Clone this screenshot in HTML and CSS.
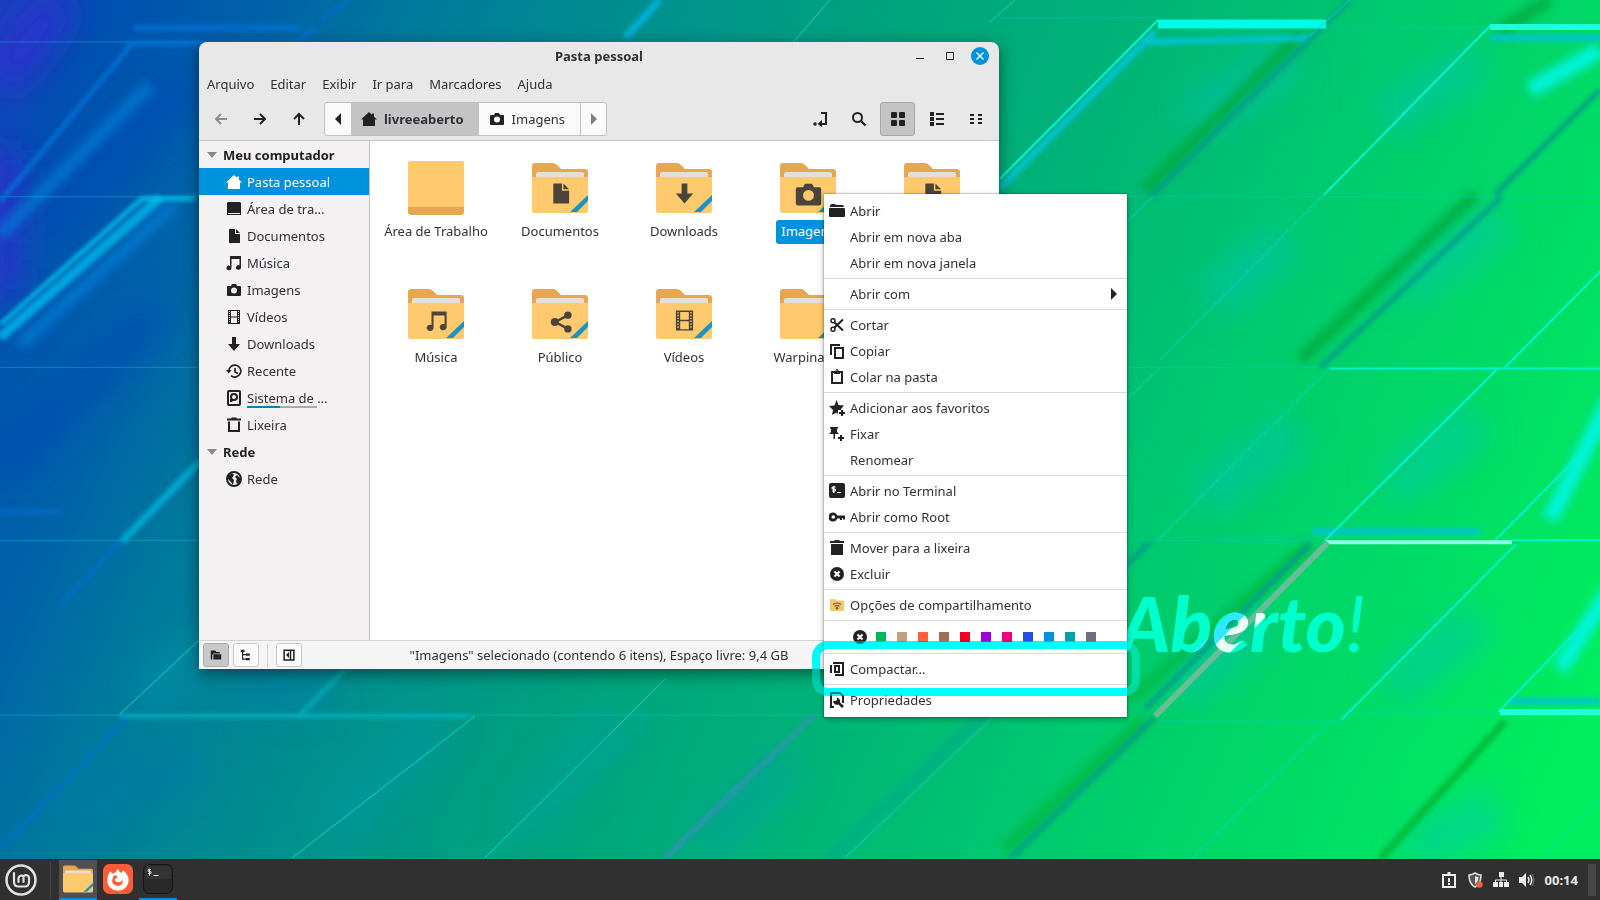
FILE: index.html
```html
<!DOCTYPE html>
<html lang="pt-BR">
<head>
<meta charset="utf-8">
<title>Pasta pessoal</title>
<link rel="stylesheet" href="styles.css">
</head>
<body>
<svg class="defs" aria-hidden="true">
  <defs>
    <symbol id="i-home" viewBox="0 0 16 16"><path d="M8 1 0 8.500h2V15h12V8.500h2L13 5.700V2.500h-2v1.300z"/></symbol>
    <symbol id="i-desktop" viewBox="0 0 16 16"><path d="M2 1h12l1 1v12H1V2z"/><path d="M2 12.500h12" stroke="#eee" stroke-width="1"/></symbol>
    <symbol id="i-doc" viewBox="0 0 16 16"><path d="M3 1h6v5h5v9H3zM10 1l4 4h-4z"/></symbol>
    <symbol id="i-music" viewBox="0 0 16 16"><path d="M4 1h11v11.500a2.500 2.300 0 1 1-1.500-2.100V4h-8v9a2.500 2.300 0 1 1-1.500-2.100z"/></symbol>
    <symbol id="i-camera" viewBox="0 0 16 16"><path fill-rule="evenodd" d="M6 2h4l1 2h3q1 0 1 1v8q0 1-1 1H2q-1 0-1-1V5q0-1 1-1h3zM8 5.500a3 3 0 1 0 0 6 3 3 0 0 0 0-6z"/></symbol>
    <symbol id="i-video" viewBox="0 0 16 16"><path fill-rule="evenodd" d="M2 1h12v14H2zm3 1v5.500h6V2zm0 6.500V14h6V8.500zM3 2v1h1V2zm0 2v1h1V4zm0 2v1h1V6zm0 2v1h1V8zm0 2v1h1v-1zm0 2v1h1v-1zm9-10v1h1V2zm0 2v1h1V4zm0 2v1h1V6zm0 2v1h1V8zm0 2v1h1v-1zm0 2v1h1v-1z"/></symbol>
    <symbol id="i-down" viewBox="0 0 16 16"><path d="M6 1h4v7h4l-6 7-6-7h4z"/></symbol>
    <symbol id="i-recent" viewBox="0 0 16 16"><path d="M2.800 8A6 6 0 1 1 5 12.700M9 5v4l3 1.500" fill="none" stroke="currentColor" stroke-width="1.700"/><path d="M0 7h5.500L2.800 10.500z"/></symbol>
    <symbol id="i-disk" viewBox="0 0 16 16"><rect x="2" y="1" width="12" height="14" rx="1" fill="none" stroke="currentColor" stroke-width="2"/><circle cx="8" cy="7" r="3" fill="none" stroke="currentColor" stroke-width="2"/><path d="M4 9h4l-2 3H4z"/></symbol>
    <symbol id="i-trash" viewBox="0 0 16 16"><path fill-rule="evenodd" d="M1 1.500h4l1-1h4l1 1h4v2H1zM2 4.500h12V15H2zm2 0V13h8V4.500z"/></symbol>
    <symbol id="i-trashfull" viewBox="0 0 16 16"><path d="M1 1h4l1-1h4l1 1h4v2H1zM2 4h12v11H2z"/></symbol>
    <symbol id="i-globe" viewBox="0 0 16 16"><circle cx="8" cy="8" r="7" fill="none" stroke="currentColor" stroke-width="2"/><path d="M2 5l4-3 2 2-2 3 2 2-1 5-2-3-3-3zM11 4l3 3v4l-3 2-1-3 1-2-2-2z"/></symbol>
    <symbol id="i-share" viewBox="0 0 16 16"><path d="M13 3 4 8l9 5" fill="none" stroke="currentColor" stroke-width="1.800"/><circle cx="13" cy="3" r="2.700"/><circle cx="3.500" cy="8" r="2.900"/><circle cx="13" cy="13" r="2.700"/></symbol>
    <symbol id="i-left" viewBox="0 0 16 16"><path d="M14 8H3M8 3 3 8l5 5" fill="none" stroke="currentColor" stroke-width="2"/></symbol>
    <symbol id="i-right" viewBox="0 0 16 16"><path d="M2 8h11M8 3l5 5-5 5" fill="none" stroke="currentColor" stroke-width="2"/></symbol>
    <symbol id="i-up" viewBox="0 0 16 16"><path d="M8 14V3M3 8l5-5 5 5" fill="none" stroke="currentColor" stroke-width="2"/></symbol>
    <symbol id="i-tril" viewBox="0 0 16 16"><path d="M11 2v12L5 8z"/></symbol>
    <symbol id="i-trir" viewBox="0 0 16 16"><path d="M5 2v12l6-6z"/></symbol>
    <symbol id="i-trid" viewBox="0 0 16 16"><path d="M3 5h10l-5 6z"/></symbol>
    <symbol id="i-path" viewBox="0 0 16 16"><path d="M9 2h5v11H8" fill="none" stroke="currentColor" stroke-width="2"/><path d="M10 9v7l-4.500-3z"/><circle cx="3" cy="13" r="1.800"/></symbol>
    <symbol id="i-search" viewBox="0 0 16 16"><circle cx="6.500" cy="6.500" r="4.500" fill="none" stroke="currentColor" stroke-width="2"/><path d="m9.500 9.500 5 5" stroke="currentColor" stroke-width="2.400"/></symbol>
    <symbol id="i-grid" viewBox="0 0 16 16"><rect x="1" y="1" width="6" height="6" rx="1"/><rect x="9" y="1" width="6" height="6" rx="1"/><rect x="1" y="9" width="6" height="6" rx="1"/><rect x="9" y="9" width="6" height="6" rx="1"/></symbol>
    <symbol id="i-list" viewBox="0 0 16 16"><path d="M1 1h4v4H1zM1 6h4v4H1zM1 11h4v4H1zM7 2h8v2H7zM7 7h8v2H7zM7 12h8v2H7z"/></symbol>
    <symbol id="i-compact" viewBox="0 0 16 16"><path d="M2 3h4v2H2zM2 7h4v2H2zM2 11h4v2H2zM10 3h4v2h-4zM10 7h4v2h-4zM10 11h4v2h-4z"/></symbol>
    <symbol id="i-folder" viewBox="0 0 16 16"><path d="M1 3q0-2 2-2h3l1 1h6q2 0 2 2H1zM0 6q0-1 1-1h14q1 0 1 1v7q0 1-1 1H1q-1 0-1-1z"/></symbol>
    <symbol id="i-minifolder" viewBox="0 0 16 16"><path d="M1 2h6l1.500 2H13v2H5L3 8v6H1zM4.500 7H15v7H4.500z"/></symbol>
    <symbol id="i-cut" viewBox="0 0 16 16"><path d="M14 2.500 5 11M14 13.500 5 5" fill="none" stroke="currentColor" stroke-width="2"/><circle cx="4" cy="3.800" r="2" fill="none" stroke="currentColor" stroke-width="1.500"/><circle cx="4" cy="12.200" r="2" fill="none" stroke="currentColor" stroke-width="1.500"/></symbol>
    <symbol id="i-copy" viewBox="0 0 16 16"><path d="M2 12V2h9" fill="none" stroke="currentColor" stroke-width="2"/><path d="M6 5h8v10H6z" fill="none" stroke="currentColor" stroke-width="2"/></symbol>
    <symbol id="i-paste" viewBox="0 0 16 16"><path d="M3 3h10v11H3z" fill="none" stroke="currentColor" stroke-width="2"/><path fill-rule="evenodd" d="M5 2h1.500a1.500 2 0 0 1 3 0H11v3H5zM7.500 1.500v1h1v-1z"/></symbol>
    <symbol id="i-star" viewBox="0 0 16 16"><path d="m7.500 0 2 5 5.500.500-3 3.500v1H9v4l-1.500-1.500L3 15l1-5L0 6l5.500-.500zM12 10h2v2h2v2h-2v2h-2v-2h-2v-2h2z"/></symbol>
    <symbol id="i-pin" viewBox="0 0 16 16"><path d="M1 1h8v1.500H8V6l2 2H6v5H4.500V8H0l2-2V2.500H1zM11 9h2v2h2v2h-2v2h-2v-2H9v-2h2z"/></symbol>
    <symbol id="i-term" viewBox="0 0 16 16"><rect width="16" height="15" rx="2"/><path d="M6.500 4H4q-1 0-1 1t1 1h1.500q1 0 1 1t-1 1H3M4.800 3v7M8 9.500h4" fill="none" stroke="#fff" stroke-width="1.200"/></symbol>
    <symbol id="i-key" viewBox="0 0 16 16"><path fill-rule="evenodd" d="M4 3.500A4.500 4.500 0 0 1 8.200 6.500H16v4h-2v-1.500h-1V11h-2V9.500H8.200A4.500 4.500 0 1 1 4 3.500zM4.300 6.200a1.800 1.800 0 1 0 0 3.600 1.800 1.800 0 0 0 0-3.600z"/></symbol>
    <symbol id="i-x" viewBox="0 0 16 16"><circle cx="8" cy="8" r="7"/><path d="m5.500 5.500 5 5m0-5-5 5" stroke="#fff" stroke-width="2"/></symbol>
    <symbol id="i-sharef" viewBox="0 0 16 16"><path d="M1 3q0-1 1-1h4l1.500 1.500H14q1 0 1 1V13q0 1-1 1H2q-1 0-1-1z" fill="#f5c56f"/><path d="M4 7.500q4-3 8 0M5.500 9.500q2.500-2 5 0" fill="none" stroke="#6b5430" stroke-width="1.200"/><circle cx="8" cy="11.300" r="1.200" fill="#6b5430"/></symbol>
    <symbol id="i-zip" viewBox="0 0 16 16"><path d="M4 2h10v12H6M2 4v8" fill="none" stroke="currentColor" stroke-width="2"/><path d="M6 5h4v6H6z" fill="none" stroke="currentColor" stroke-width="2"/></symbol>
    <symbol id="i-props" viewBox="0 0 16 16"><path d="M5 15H2V1h9l3 3v7" fill="none" stroke="currentColor" stroke-width="2"/><path d="M4 9h2.500l1.500-1V5.500a4 4 0 0 1 3 5L15 14l-2 2-3.500-3.500A4 4 0 0 1 4 9z"/></symbol>
    <symbol id="i-tree" viewBox="0 0 16 16"><path d="M3.500 2v11.500H8M3.500 7.500H8M5 3.500H3" fill="none" stroke="currentColor" stroke-width="1.500"/><path d="M1 1h5v3H1zM8 6h5v3H8zM8 12h5v3H8z"/></symbol>
    <symbol id="i-panel" viewBox="0 0 16 16"><path d="M1.500 1.500h13v13h-13zM10 2v12" fill="none" stroke="currentColor" stroke-width="2"/><path d="M8 4v8L4 8z"/></symbol>
    <symbol id="folder" viewBox="0 0 56 56"><path d="M0 6q0-3 3-3h18q2 0 4 2l4 4h24q3 0 3 3v12H0z" fill="#e6a750"/><path d="M4 20v-6q0-2 2-2h44q2 0 2 2v6z" fill="#e4e0d8"/><path d="M0 17h56v33q0 3-3 3H3q-3 0-3-3z" fill="#ffca6d"/><path d="M0 50q0 3 3 3h50q3 0 3-3v1q0 2-3 2H3q-3 0-3-2z" fill="#d5b374"/><path d="M56 35v6L45 52h-7z" fill="#1a94c4"/></symbol>
  </defs>
</svg>

<main class="desktop">
  <svg class="wallpaper" viewBox="0 0 1600 860" preserveAspectRatio="none" aria-hidden="true">
    <defs>
      <linearGradient id="base" x1="0" y1="0" x2="1600" y2="700" gradientUnits="userSpaceOnUse">
        <stop offset="0" stop-color="#1a40c0"/><stop offset=".06" stop-color="#0050b0"/><stop offset=".15" stop-color="#0064a8"/><stop offset=".22" stop-color="#007a9c"/><stop offset=".34" stop-color="#00908e"/><stop offset=".48" stop-color="#00a47c"/><stop offset=".6" stop-color="#00b478"/><stop offset=".77" stop-color="#00cf6c"/><stop offset="1" stop-color="#00ee5e"/>
      </linearGradient>
      <filter id="soft" x="-30%" y="-30%" width="160%" height="160%"><feGaussianBlur stdDeviation="16"/></filter>
      <filter id="fine" x="-30%" y="-30%" width="160%" height="160%"><feGaussianBlur stdDeviation="2"/></filter>
      <filter id="edge" x="-30%" y="-30%" width="160%" height="160%"><feGaussianBlur stdDeviation="5"/></filter>
      <clipPath id="word"><text class="brand" x="1120" y="653">Aberto<tspan class="bang">!</tspan></text></clipPath>
    </defs>
    <rect width="1600" height="860" fill="url(#base)"/>
    <g filter="url(#soft)" fill="none" stroke-width="44">
      <path d="M0 80 60 0M0 150V300" stroke="#3a28d8" opacity=".6"/>
      <path d="M40 240 190 80M0 470 160 310" stroke="#0048b8" opacity=".5"/>
      <path d="M1190 120 1290 60M1380 120 1480 60M1210 300 1290 240M1400 290 1500 220M1200 500 1300 430M1390 490 1480 420M1180 690 1260 620M1390 690 1480 620M1410 850 1500 810" stroke="#00c0c0" opacity=".45"/>
      <path d="M140 700 260 600M330 830 440 720M520 830 620 720M700 850 790 760" stroke="#0098b0" opacity=".4"/>
      <path d="M60 820 200 760M240 690 330 690" stroke="#0078b0" opacity=".4"/>
    </g>
    <g filter="url(#edge)" fill="none" stroke-width="12">
      <path d="M1145 190 1300 35M1300 360 1475 195M1500 30 1550 0" stroke="#00a838" opacity=".8"/>
      <path d="M1130 700 1310 545M1005 850 1145 720" stroke="#00b840" opacity=".8"/>
      <path d="M1610 400 1550 520M1610 590 1560 670M1530 90 1600 50" stroke="#00f4dc" stroke-width="16"/>
      <path d="M20 345 175 205M0 235 150 85" stroke="#0080d8" opacity=".7"/>
      <path d="M830 860 990 710M490 860 650 712" stroke="#00a890" opacity=".6"/>
    </g>
    <g fill="none" stroke="#00d0e0" stroke-width="1" opacity=".4">
      <path d="M0 42H1000M0 197H200M1000 18H1158M1328 27H1490M1127 197H1600M0 368H200M1127 368H1330M0 541H200M1127 541H1325M1160 722H1340L1352 714H1500M0 716H830"/>
    </g>
    <g filter="url(#fine)" fill="none">
      <path d="M0 338 160 198" stroke="#00a4e0" stroke-width="10"/>
      <path d="M0 325 142 199H195" stroke="#00c8f0" stroke-width="4"/>
      <path d="M125 44H295L315 28M133 28H300M0 202 132 44" stroke="#0074d8" stroke-width="4"/>
      <path d="M122 542 200 462" stroke="#00a8d0" stroke-width="7"/>
      <path d="M0 512H60M60 607 120 542M0 850 130 716M320 20 350 0" stroke="#0070d0" stroke-width="3"/>
      <path d="M625 38 660 0" stroke="#00b0d8" stroke-width="7"/>
      <path d="M1000 188 1155 32M1145 42 1310 38M1490 38H1600M1312 532H1480M1510 702H1600" stroke="#00c4d4" stroke-width="6"/>
      <path d="M300 716 345 670M990 714 1040 690M120 717H470" stroke="#00b8c0" stroke-width="3"/>
      <path d="M1150 197 1350 0M1495 195 1600 90M1320 368 1502 197M1145 710 1310 545M1010 860 1155 718M1127 565 1150 543" stroke="#00a088" stroke-width="5"/>
      <path d="M1380 860 1505 722" stroke="#00c03c" stroke-width="8"/>
      <path d="M665 859 815 715" stroke="#3890b8" stroke-width="4"/>
    </g>
    <g fill="none" stroke="#00f4d4" stroke-width="2">
      <path d="M1000 179 1158 20M1324 195 1490 26M1505 368 1600 272M1325 541 1497 370M1495 541 1600 435M1498 713 1600 608M1341 721 1516 545"/>
      <path d="M1158 24H1326" stroke-width="9" stroke="#00fce8"/>
      <path d="M1490 27H1600M1500 713H1600" stroke-width="6" stroke="#20ffd8"/>
      <path d="M1330 369H1600M1510 541H1600"/>
      <path d="M1325 543H1512" stroke="#90ffe8" stroke-width="4"/>
    </g>
    <g fill="none" stroke="#00dcc8" stroke-width="1">
      <path d="M1310 36 1350 0M1127 222 1153 197M1160 360 1324 195M1127 400 1160 368M1157 541 1329 369M1192 860 1330 722M1540 860 1600 800M990 22 1015 0M790 46 830 0M292 859 475 717M485 859 665 680M845 859 995 716M120 715 200 640"/>
    </g>
    <path d="M1155 717 1328 543" stroke="#68bc98" stroke-width="6"/>
    <text class="brand" x="1120" y="653">Aberto<tspan class="bang">!</tspan></text>
    <g clip-path="url(#word)"><path d="M1190 665 1260 590" stroke="#30e8ff" stroke-width="12"/><path d="M1205 667 1290 582" stroke="#e8fff4" stroke-width="16"/></g>
  </svg>

  <section class="window" aria-label="Pasta pessoal">
    <header class="titlebar">
      <span></span>
      <h1>Pasta pessoal</h1>
      <div class="controls">
        <button aria-label="Minimizar"><svg viewBox="0 0 18 18"><path d="M5 11.500h8" stroke="#222"/></svg></button>
        <button aria-label="Maximizar"><svg viewBox="0 0 18 18"><path d="M5.500 5.500h7v7h-7z" fill="none" stroke="#222"/></svg></button>
        <button class="close" aria-label="Fechar"><svg viewBox="0 0 18 18"><path d="m5.500 5.500 7 7m0-7-7 7" stroke="#fff" stroke-width="1.400"/></svg></button>
      </div>
    </header>
    <nav class="menubar">
      <button>Arquivo</button><button>Editar</button><button>Exibir</button><button>Ir para</button><button>Marcadores</button><button>Ajuda</button>
    </nav>
    <div class="toolbar">
      <div class="tools">
        <button class="tool" disabled aria-label="Voltar"><svg class="ic"><use href="#i-left"/></svg></button>
        <button class="tool" aria-label="Avançar"><svg class="ic"><use href="#i-right"/></svg></button>
        <button class="tool" aria-label="Acima"><svg class="ic"><use href="#i-up"/></svg></button>
      </div>
      <div class="crumbs">
        <button class="nudge" aria-label="Anterior"><svg class="ic"><use href="#i-tril"/></svg></button>
        <button class="current"><svg class="ic"><use href="#i-home"/></svg>livreeaberto</button>
        <button><svg class="ic"><use href="#i-camera"/></svg>Imagens</button>
        <button class="nudge faded" aria-label="Próximo"><svg class="ic"><use href="#i-trir"/></svg></button>
      </div>
      <div class="tools right">
        <button class="tool" aria-label="Local"><svg class="ic"><use href="#i-path"/></svg></button>
        <button class="tool" aria-label="Pesquisar"><svg class="ic"><use href="#i-search"/></svg></button>
        <button class="tool on" aria-label="Ícones"><svg class="ic"><use href="#i-grid"/></svg></button>
        <button class="tool" aria-label="Lista"><svg class="ic"><use href="#i-list"/></svg></button>
        <button class="tool" aria-label="Compacto"><svg class="ic"><use href="#i-compact"/></svg></button>
      </div>
    </div>
    <div class="body">
      <aside class="sidebar">
        <h2><svg class="ic"><use href="#i-trid"/></svg>Meu computador</h2>
        <a class="active" href="#"><svg class="ic"><use href="#i-home"/></svg>Pasta pessoal</a>
        <a href="#"><svg class="ic"><use href="#i-desktop"/></svg>Área de tra…</a>
        <a href="#"><svg class="ic"><use href="#i-doc"/></svg>Documentos</a>
        <a href="#"><svg class="ic"><use href="#i-music"/></svg>Música</a>
        <a href="#"><svg class="ic"><use href="#i-camera"/></svg>Imagens</a>
        <a href="#"><svg class="ic"><use href="#i-video"/></svg>Vídeos</a>
        <a href="#"><svg class="ic"><use href="#i-down"/></svg>Downloads</a>
        <a href="#"><svg class="ic"><use href="#i-recent"/></svg>Recente</a>
        <a href="#"><svg class="ic"><use href="#i-disk"/></svg><span class="usage">Sistema de …</span></a>
        <a href="#"><svg class="ic"><use href="#i-trash"/></svg>Lixeira</a>
        <h2><svg class="ic"><use href="#i-trid"/></svg>Rede</h2>
        <a href="#"><svg class="ic"><use href="#i-globe"/></svg>Rede</a>
      </aside>
      <div class="files">
        <a class="file" href="#"><svg viewBox="0 0 56 56"><rect y="1" width="56" height="54" rx="3" fill="#e6a750"/><path d="M0 47V4q0-3 3-3h50q3 0 3 3v43z" fill="#ffca6d"/></svg><span>Área de Trabalho</span></a>
        <a class="file" href="#"><svg viewBox="0 0 56 56"><use href="#folder"/><use href="#i-doc" x="17" y="22" width="23" height="23"/></svg><span>Documentos</span></a>
        <a class="file" href="#"><svg viewBox="0 0 56 56"><use href="#folder"/><use href="#i-down" x="17" y="22" width="23" height="23"/></svg><span>Downloads</span></a>
        <a class="file selected" href="#"><svg viewBox="0 0 56 56"><use href="#folder"/><use href="#i-camera" x="14" y="20" width="29" height="29"/></svg><span>Imagens</span></a>
        <a class="file" href="#"><svg viewBox="0 0 56 56"><use href="#folder"/><use href="#i-doc" x="17" y="22" width="23" height="23"/></svg></a>
        <a class="file" href="#"><svg viewBox="0 0 56 56"><use href="#folder"/><use href="#i-music" x="18" y="24" width="22" height="22"/></svg><span>Música</span></a>
        <a class="file" href="#"><svg viewBox="0 0 56 56"><use href="#folder"/><use href="#i-share" x="18" y="25" width="22" height="22"/></svg><span>Público</span></a>
        <a class="file" href="#"><svg viewBox="0 0 56 56"><use href="#folder"/><use href="#i-video" x="17" y="23" width="23" height="23"/></svg><span>Vídeos</span></a>
        <a class="file" href="#"><svg viewBox="0 0 56 56"><use href="#folder"/></svg><span>Warpinator</span></a>
      </div>
    </div>
    <footer class="status">
      <div class="panes">
        <button class="on" aria-label="Locais"><svg class="ic"><use href="#i-minifolder"/></svg></button>
        <button aria-label="Árvore"><svg class="ic"><use href="#i-tree"/></svg></button>
        <i></i>
        <button aria-label="Ocultar painel"><svg class="ic"><use href="#i-panel"/></svg></button>
      </div>
      <span>"Imagens" selecionado (contendo 6 itens), Espaço livre: 9,4 GB</span>
      <span></span>
    </footer>
  </section>

  <div class="context" role="menu">
    <button><svg class="ic"><use href="#i-folder"/></svg>Abrir</button>
    <button><i></i>Abrir em nova aba</button>
    <button><i></i>Abrir em nova janela</button>
    <hr>
    <button><i></i>Abrir com<svg class="ic more"><use href="#i-trir"/></svg></button>
    <hr>
    <button><svg class="ic"><use href="#i-cut"/></svg>Cortar</button>
    <button><svg class="ic"><use href="#i-copy"/></svg>Copiar</button>
    <button><svg class="ic"><use href="#i-paste"/></svg>Colar na pasta</button>
    <hr>
    <button><svg class="ic"><use href="#i-star"/></svg>Adicionar aos favoritos</button>
    <button><svg class="ic"><use href="#i-pin"/></svg>Fixar</button>
    <button><i></i>Renomear</button>
    <hr>
    <button><svg class="ic"><use href="#i-term"/></svg>Abrir no Terminal</button>
    <button><svg class="ic"><use href="#i-key"/></svg>Abrir como Root</button>
    <hr>
    <button><svg class="ic"><use href="#i-trashfull"/></svg>Mover para a lixeira</button>
    <button><svg class="ic"><use href="#i-x"/></svg>Excluir</button>
    <hr>
    <button><svg class="ic"><use href="#i-sharef"/></svg>Opções de compartilhamento</button>
    <hr>
    <div class="swatches">
      <svg class="ic"><use href="#i-x"/></svg>
      <b class="c1"></b><b class="c2"></b><b class="c3"></b><b class="c4"></b><b class="c5"></b><b class="c6"></b><b class="c7"></b><b class="c8"></b><b class="c9"></b><b class="c10"></b><b class="c11"></b>
    </div>
    <hr>
    <button><svg class="ic"><use href="#i-zip"/></svg>Compactar...</button>
    <hr>
    <button><svg class="ic"><use href="#i-props"/></svg>Propriedades</button>
  </div>
  <div class="marker tint"></div>
  <div class="marker"></div>
</main>

<footer class="taskbar">
  <button class="mint" aria-label="Menu"><svg viewBox="0 0 32 32" fill="none" stroke="#e2e2e2" stroke-linecap="round" stroke-linejoin="round"><circle cx="16" cy="16" r="14.500" stroke-width="2.500"/><path d="M9 9v9q0 4.500 4.500 4.500h6q4.500 0 4.500-4.500v-4a3 3 0 0 0-5.500-1.500 3 3 0 0 0-5 1.500v4M18.500 14v4" stroke-width="2.200"/></svg></button>
  <i class="rule"></i>
  <button class="task active" aria-label="Arquivos"><svg viewBox="0 0 56 56"><use href="#folder"/></svg></button>
  <button class="task idle" aria-label="Firefox"><svg viewBox="0 0 28 28"><rect width="28" height="28" rx="6" fill="#ff5b36"/><path d="M14 4.500q.500 3 3 4l2-2.500q5 4 5 9.500a10 9.500 0 0 1-20 0q0-6 3-8.500l2 2q2-1 3-1 0-2 2-3.500z" fill="#fff"/><path d="M10 10.500q3 0 4 2l-3 1.500q.500 3 3.500 3 3 0 3.500-3 1.500 6-4 6.500-5.500-.500-5.500-5z" fill="#ff5b36"/></svg></button>
  <button class="task" aria-label="Terminal"><svg viewBox="0 0 30 30"><rect x=".5" y=".5" width="29" height="29" rx="6" fill="#292929" stroke="#151515"/><path d="M2 6q0-4 4-4h18q4 0 4 4v9H2z" fill="#343434"/><path d="M8 5.500H6q-1 0-1 1t1 1h1q1 0 1 1t-1 1H5M6.500 4.500v7M10.500 11.500h5" fill="none" stroke="#fff"/></svg></button>
  <div class="tray">
    <svg viewBox="0 0 16 16" fill="none" stroke="#eee"><path d="M2 3h12v12H2z" stroke-width="2"/><path d="M5 3h6M6.500 1h3M8 6v4M8 11v2" stroke-width="2"/></svg>
    <svg viewBox="0 0 16 16"><path d="M8 1q3 2 6 2 0 9-6 12Q2 12 2 3q3 0 6-2z" fill="#555" stroke="#ddd" stroke-width="1.600"/><path d="M8 4q2 1 3.500 1 0 5-3.500 7z" fill="#eee"/><circle cx="12.500" cy="12.500" r="3.200" fill="#e8623c"/></svg>
    <svg viewBox="0 0 16 16" fill="#eee"><path d="M6 0h5v5H6zM0 10h5v5H0zM6 10h4v5H6zM11 10h5v5h-5z"/><path d="M8 5v6M2.500 11V8h11v3" fill="none" stroke="#eee"/></svg>
    <svg viewBox="0 0 16 16" fill="#eee"><path d="M0 5h3l4-4v14l-4-4H0z"/><path d="M9 5q2 3 0 6M11 3q3.500 5 0 10" fill="none" stroke="#eee" stroke-width="1.500"/><path d="M13.500 2q3 6 0 12" fill="none" stroke="#777"/></svg>
    <time>00:14</time>
    <i class="show"></i>
  </div>
</footer>
</body>
</html>
```

FILE: styles.css
```css
* { box-sizing: border-box; }
body {
  margin: 0;
  height: 100vh;
  display: flex;
  flex-direction: column;
  overflow: hidden;
  font: 13px/20px "Noto Sans", "Open Sans", sans-serif;
  color: #303036;
}
button { font: inherit; color: inherit; border: 0; background: none; padding: 0; }
a { color: inherit; text-decoration: none; }
h1, h2 { margin: 0; font-size: 13px; font-weight: 700; }
.defs { position: absolute; width: 0; height: 0; }
.ic { width: 16px; height: 16px; fill: currentColor; color: #222; flex: none; display: block; }

.desktop { position: relative; flex: 1; min-height: 0; isolation: isolate; overflow: hidden; }
.wallpaper { position: absolute; inset: 0; width: 100%; height: 100%; }
.brand { font: italic 900 77px Lato, sans-serif; fill: #00ffcc; }
.bang { font-weight: 400; }

/* File manager window */
.window {
  position: absolute;
  left: 199px;
  top: 42px;
  width: 50%;
  height: 73%;
  display: flex;
  flex-direction: column;
  background: #e8e8e8;
  border-radius: 8px 8px 0 0;
  overflow: hidden;
  box-shadow: 0 4px 16px rgba(0, 0, 0, .5);
}
.titlebar { display: grid; grid-template-columns: 1fr auto 1fr; align-items: center; height: 28px; padding: 0 10px; }
.controls { display: flex; justify-content: flex-end; gap: 12px; }
.controls button, .controls svg { width: 18px; height: 18px; display: block; }
.close { border-radius: 50%; background: #0093dd; }
.menubar { display: flex; gap: 16px; height: 28px; padding: 0 8px; }
.toolbar { display: flex; padding: 4px 6px 4px 4px; border-bottom: 1px solid #c4c4c4; }
.tools { display: flex; gap: 4px; }
.right { margin-left: auto; }
.tool { width: 35px; height: 34px; display: grid; place-items: center; border-radius: 3px; }
.tool:disabled .ic { color: #8c8c8c; }
.tool.on { background: #c4c4c4; border: 1px solid #a6a6a6; }
.crumbs { display: flex; margin-left: 8px; border: 1px solid #c0c0c0; border-radius: 3px; background: #fafafa; }
.crumbs button { display: flex; align-items: center; gap: 7px; padding: 0 15px 0 10px; }
.crumbs .nudge { width: 26px; padding: 0; justify-content: center; }
.crumbs .current { background: #c4c4c4; font-weight: 700; }
.crumbs .faded { border-left: 1px solid #c0c0c0; }
.faded .ic { color: #808080; }
.body { flex: 1; min-height: 0; display: grid; grid-template-columns: 171px 1fr; }
.sidebar { background: #f3f1f2; border-right: 1px solid #c4c4c4; }
.sidebar h2, .sidebar a { display: flex; align-items: center; height: 27px; }
.sidebar h2 { padding-left: 5px; gap: 3px; color: #222; }
.sidebar h2 .ic { color: #888; }
.sidebar a { padding-left: 27px; gap: 5px; }
.sidebar .active, .active .ic { background: #0093dd; color: #fff; }
.usage { background: linear-gradient(90deg, #0088a8 47%, #aaa 47%) left bottom / 70px 2px no-repeat; }
.files {
  background: #fff;
  display: grid;
  grid-template-columns: repeat(auto-fill, 124px);
  align-content: start;
  row-gap: 42px;
  padding: 19px 0 0 4px;
}
.file { display: flex; flex-direction: column; align-items: center; gap: 4px; }
.file svg { width: 56px; height: 56px; fill: #4b443a; color: #4b443a; }
.file span { padding: 1px 5px 3px; border-radius: 3px; }
.file.selected span { background: #0093dd; color: #fff; }
.status {
  display: grid;
  grid-template-columns: 1fr auto 1fr;
  align-items: center;
  height: 29px;
  padding: 0 4px;
  background: #f5f5f5;
  border-top: 1px solid #d4d4d4;
}
.panes { display: flex; gap: 4px; }
.panes button { width: 26px; height: 24px; display: grid; place-items: center; border: 1px solid #c8c8c8; border-radius: 3px; background: #fbfbfb; }
.panes .on { background: #c8c8c8; border-color: #adadad; }
.panes .ic { width: 12px; height: 12px; }
.panes i { width: 1px; margin: 0 4px; background: #d8d8d8; }

/* Context menu */
.context {
  position: absolute;
  left: 824px;
  top: 194px;
  width: 303px;
  padding: 4px 0;
  background: #fff;
  box-shadow: 0 0 1px 1px rgba(0, 0, 0, .15), 0 2px 6px rgba(0, 0, 0, .3);
}
.context button { display: flex; align-items: center; width: 100%; height: 26px; padding: 0 5px; gap: 5px; text-align: left; }
.context i { width: 16px; }
.context .more { margin-left: auto; }
.context hr { height: 1px; margin: 2px 0; border: 0; background: #dadada; }
.swatches { display: flex; align-items: center; gap: 11px; height: 28px; padding-left: 28px; }
.swatches .ic { margin-right: -3px; }
.swatches b { width: 10px; height: 10px; }
.c1 { background: #00b65c; }
.c2 { background: #c6a07c; }
.c3 { background: #ff5f38; }
.c4 { background: #9c7058; }
.c5 { background: #f50020; }
.c6 { background: #a000dc; }
.c7 { background: #f5007c; }
.c8 { background: #2450e0; }
.c9 { background: #0093dd; }
.c10 { background: #00a0ac; }
.c11 { background: #70707c; }
.marker { position: absolute; left: 812px; top: 641px; width: 328px; height: 55px; border: 8px solid #0ff; border-radius: 16px; mix-blend-mode: multiply; pointer-events: none; }
.tint { opacity: .4; mix-blend-mode: normal; }

/* Panel */
.taskbar { display: flex; height: 41px; background: #303030; border-top: 1px solid #1e2a26; }
.mint { margin-left: 4px; width: 34px; display: grid; place-items: center; }
.mint svg { width: 32px; height: 32px; display: block; }
.rule { width: 1px; margin: 2px 8px 2px 12px; background: #484848; }
.task { width: 38px; margin-right: 2px; display: grid; place-items: center; border-bottom: 2px solid #0093dd; }
.task svg { width: 30px; height: 30px; display: block; }
.task.active { background: #505050; }
.task.idle { border-color: transparent; }
.tray { margin-left: auto; display: flex; align-items: center; gap: 10px; padding-right: 4px; }
.tray svg { width: 16px; height: 16px; display: block; }
.tray time { color: #e8e8e8; font-weight: 700; }
.show { width: 8px; height: 32px; background: #484848; }
```
